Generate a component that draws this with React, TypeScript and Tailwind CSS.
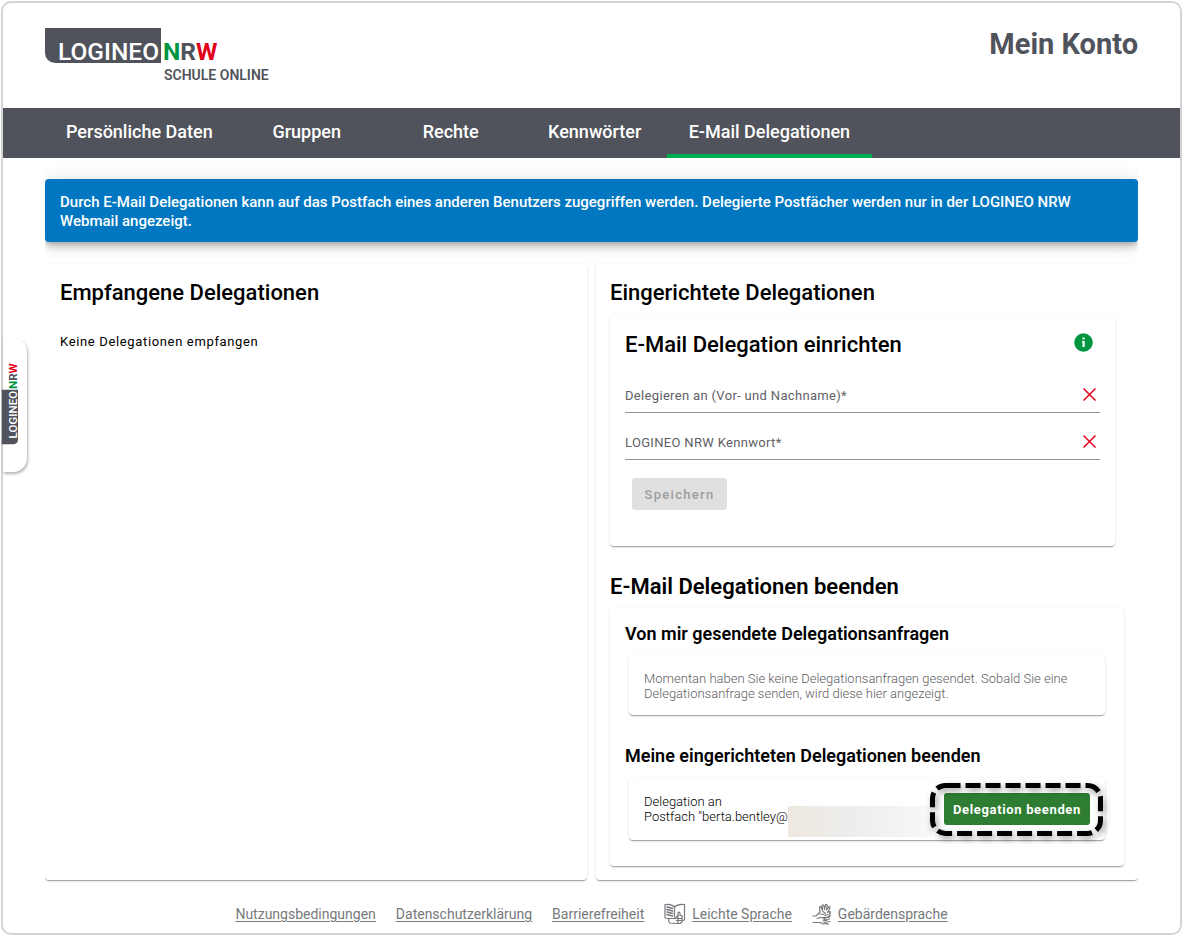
import { useState } from 'react'
import type { ReactNode } from 'react'

type Tab = 'Persönliche Daten' | 'Gruppen' | 'Rechte' | 'Kennwörter' | 'E-Mail Delegationen'

const tabs: Tab[] = ['Persönliche Daten', 'Gruppen', 'Rechte', 'Kennwörter', 'E-Mail Delegationen']

function Logo({ className, claim }: { className: string; claim?: boolean }) {
  return (
    <svg viewBox={claim ? '0 0 226 54' : '0 0 174 36'} className={className} role="img" aria-label="LOGINEO NRW">
      <path d="M0 0H116V35H10A10 10 0 0 1 0 25Z" fill="#50535b" />
      <g fontFamily="Roboto, sans-serif" fontSize="24.5">
        <text x="13" y="32" fill="#fff" fontWeight="500">LOGINEO</text>
        <text x="118" y="32" fontWeight="700" fill="#009640">
          N<tspan fill="#50535b">R</tspan><tspan fill="#e2001a">W</tspan>
        </text>
      </g>
      {claim && (
        <text x="119" y="52" fill="#50535b" fontFamily="Roboto, sans-serif" fontSize="14" fontWeight="600">
          SCHULE ONLINE
        </text>
      )}
    </svg>
  )
}

function BookIcon() {
  return (
    <svg width="22" height="22" viewBox="0 0 22 22" fill="none" stroke="#77797d" strokeWidth="1.2" strokeLinejoin="round" strokeLinecap="round">
      <path d="M1 1.5C4.500 1 8 1.500 10.500 4C13 1.500 17 1 20.500 1.500V17L18 17.500M1 1.500V15L5 15.500M10.500 4V14" />
      <path d="M3 4L8.500 5.500M3 6.500L8.500 8M3 9L8.500 10.500M3 11.500L8.500 13" strokeWidth="1.500" />
      <path d="M5 15.500H11L14 12.500V9.500C15.500 8.500 16.500 10 16 12.500H18V19L16 20.500H12L5.500 20C4.500 18.500 4.500 17 5 15.500Z" fill="#fff" />
      <path d="M12.500 15.500H17.500M12.500 17.500H17.500M14 20V13" />
    </svg>
  )
}

function HandsIcon() {
  return (
    <svg width="20" height="22" viewBox="0 0 20 22" fill="none" stroke="#77797d" strokeWidth="1.2" strokeLinejoin="round" strokeLinecap="round">
      <path d="M1 13H4L8 9L7.500 4C8.500 3 9.500 4 9.500 5.500L10.500 7.500L10 2.500C11 1.500 12 2 12 3.500L12.500 6.500L13.500 1.500C15 1 15.500 2 15 3.500L14.500 7L17 3.500C18 3.500 18.500 4.500 17.500 6L15.500 9.500L18 8.500C19 9 18.500 10 17.500 10.500L18 13L16.500 14.500L9 14.500L5 15.500" />
      <path d="M1 19.500H8L11 21L15 20.500L16 21.500M11 16L15 14.500L18 12.500M11 18L17.500 16M12 19.500L18 18.500M8 11L12 11.500" />
      <path d="M11 8.500L13.500 10.500M12.500 16.500L14.500 17.500M13 12.500L16 11.500" />
    </svg>
  )
}

function Card({ className = '', children }: { className?: string; children: ReactNode }) {
  return (
    <div
      className={`rounded bg-white shadow-[0_2px_1px_-1px_rgba(0,0,0,0.2),0_1px_1px_0_rgba(0,0,0,0.14),0_1px_3px_0_rgba(0,0,0,0.12)] ${className}`}
    >
      {children}
    </div>
  )
}

function Field({ id, label, type, value, onChange }: {
  id: string
  label: string
  type: string
  value: string
  onChange: (value: string) => void
}) {
  return (
    <div className="flex h-[47px] items-center border-b border-[#949494] pt-[11px]">
      <label htmlFor={id} className="pt-0.5 text-[13px] tracking-wide text-[#5f6067]">{label}</label>
      <input
        id={id}
        type={type}
        value={value}
        onChange={e => onChange(e.target.value)}
        className="min-w-0 flex-1 px-2 text-[13px] outline-none"
      />
      <button type="button" aria-label={`${label} leeren`} onClick={() => onChange('')} className="p-1">
        <svg width="13" height="13" viewBox="0 0 13 13" stroke="#e2001a" strokeWidth="1.500">
          <path d="M0.500 0.500L12.500 12.500M12.500 0.500L0.500 12.500" />
        </svg>
      </button>
    </div>
  )
}

export default function App() {
  const [activeTab, setActiveTab] = useState<Tab>('E-Mail Delegationen')
  const [delegate, setDelegate] = useState('')
  const [password, setPassword] = useState('')

  return (
    <div className="flex min-h-screen bg-white p-px font-[Roboto,sans-serif] text-black">
      <div className="relative flex-1 rounded-[10px] border-2 border-[#d4d4d4]">
        {/* HEADER */}
        <header className="flex h-[105px] items-start justify-between px-[42px] pt-[25px]">
          <Logo claim className="h-[54px] w-[226px]" />
          <h1 className="text-[29px] leading-8 font-bold text-[#50535b]">Mein Konto</h1>
        </header>

        {/* TABS */}
        <nav className="flex h-[50px] bg-[#50535b] px-[41px]">
          {tabs.map(tab => (
            <button
              key={tab}
              onClick={() => setActiveTab(tab)}
              className={`min-w-[144px] border-b-4 px-[22px] pt-0.5 text-lg font-medium text-white ${
                activeTab === tab ? 'border-[#00b050]' : 'border-transparent'
              }`}
            >
              {tab}
            </button>
          ))}
        </nav>

        <main className="mx-[42px] overflow-hidden pt-[21px] pb-1">
          <p className="rounded bg-[#0077c0] px-[15px] pt-[14px] pb-[11px] text-[15px] leading-[19px] font-medium text-white shadow-[0_3px_5px_-1px_rgba(0,0,0,0.2),0_6px_10px_0_rgba(0,0,0,0.14),0_1px_18px_0_rgba(0,0,0,0.12)]">
            Durch E-Mail Delegationen kann auf das Postfach eines anderen Benutzers zugegriffen werden. Delegierte
            Postfächer werden nur in der LOGINEO NRW Webmail angezeigt.
          </p>

          <div className="relative mt-[22px] grid grid-cols-2 gap-[9px]">
            {/* RECEIVED */}
            <Card className="px-[15px] pt-[17px]">
              <h2 className="text-[22px] leading-6 font-medium">Empfangene Delegationen</h2>
              <p className="mt-[27px] text-[13px] leading-5 tracking-wider">Keine Delegationen empfangen</p>
            </Card>

            {/* GRANTED */}
            <Card className="px-[14px] pt-[17px] pb-[14px]">
              <h2 className="text-[22px] leading-6 font-medium">Eingerichtete Delegationen</h2>
              <Card className="mt-[11px] mr-[9px] px-[15px] pt-[17px] pb-9">
                <div className="mb-[9px] flex items-start justify-between">
                  <h3 className="text-[22px] leading-6 font-medium">E-Mail Delegation einrichten</h3>
                  <button type="button" aria-label="Information" className="mr-[7px]">
                    <svg width="19" height="19" viewBox="0 0 19 19">
                      <circle cx="9.500" cy="9.500" r="9.300" fill="#009640" />
                      <path d="M8.500 4.500H10.700V6.500H8.500ZM8 8H10.700V14H8.500V9.200H8Z" fill="#fff" />
                    </svg>
                  </button>
                </div>
                <Field id="delegate" label="Delegieren an (Vor- und Nachname)*" type="text" value={delegate} onChange={setDelegate} />
                <Field id="password" label="LOGINEO NRW Kennwort*" type="password" value={password} onChange={setPassword} />
                <button
                  disabled={!delegate || !password}
                  className="mt-[18px] ml-[7px] h-8 w-[95px] rounded-[3px] bg-[#e0e0e0] pt-0.5 text-[13px] font-medium tracking-widest text-[#9d9d9d]"
                >
                  Speichern
                </button>
              </Card>

              <h2 className="mt-[29px] text-[22px] leading-6 font-semibold">E-Mail Delegationen beenden</h2>
              <Card className="mt-[9px] px-[15px] pt-[14px] pb-[26px]">
                <h3 className="text-lg leading-6 font-semibold">Von mir gesendete Delegationsanfragen</h3>
                <Card className="mx-1 mt-[9px] px-[15px] pt-4 pb-[14px]">
                  <p className="text-[13px] leading-[15px] font-light text-[#606060]">
                    Momentan haben Sie keine Delegationsanfragen gesendet. Sobald Sie eine Delegationsanfrage senden, wird
                    diese hier angezeigt.
                  </p>
                </Card>

                <h3 className="mt-[29px] text-lg leading-6 font-semibold">Meine eingerichteten Delegationen beenden</h3>
                <Card className="mx-1 mt-[10px] flex items-start p-[15px]">
                  <p className="pt-px text-[13px] leading-[15px] font-light">
                    Delegation an
                    <br />
                    Postfach "berta.bentley@
                  </p>
                  <div className="mt-[13px] -mb-3 h-[31px] min-w-0 flex-1 bg-linear-to-r from-[#eee8df] via-[#eeeeef] to-[#f8f8f8]" />
                  <div className="relative ml-3">
                    <button className="h-8 w-[146px] rounded-[3px] bg-[#2e7d32] pt-0.5 text-[13px] font-bold tracking-wider text-white">
                      Delegation beenden
                    </button>
                    <svg
                      width="173"
                      height="53"
                      viewBox="0 0 173 53"
                      className="pointer-events-none absolute -top-[10px] -left-[14px] overflow-visible drop-shadow-[2px_3px_3px_rgba(0,0,0,0.4)]"
                    >
                      <rect x="2.500" y="2.500" width="168" height="48" rx="13" fill="none" stroke="#000" strokeWidth="5" strokeDasharray="15 5" />
                    </svg>
                  </div>
                </Card>
              </Card>
            </Card>
          </div>
        </main>

        {/* FOOTER */}
        <footer className="flex items-center justify-center gap-5 pt-[19px] pb-2 text-sm text-[#77797d]">
          <a href="#nutzung" className="underline underline-offset-2">Nutzungsbedingungen</a>
          <a href="#datenschutz" className="underline underline-offset-2">Datenschutzerklärung</a>
          <a href="#barrierefreiheit" className="underline underline-offset-2">Barrierefreiheit</a>
          <div className="flex items-center gap-[6px]">
            <BookIcon />
            <a href="#leichte-sprache" className="underline underline-offset-2">Leichte Sprache</a>
          </div>
          <div className="flex items-center gap-[6px]">
            <HandsIcon />
            <a href="#gebaerdensprache" className="underline underline-offset-2">Gebärdensprache</a>
          </div>
        </footer>

        {/* SIDE HANDLE */}
        <button
          type="button"
          aria-label="LOGINEO NRW Menü"
          className="absolute top-[335px] left-0 flex h-[134px] w-6 items-center justify-center rounded-r-[14px] bg-white pr-[10px] pb-1 shadow-[1px_2px_3px_rgba(0,0,0,0.3)]"
        >
          <Logo className="h-[17px] w-[82px] shrink-0 -rotate-90" />
        </button>
      </div>
    </div>
  )
}
